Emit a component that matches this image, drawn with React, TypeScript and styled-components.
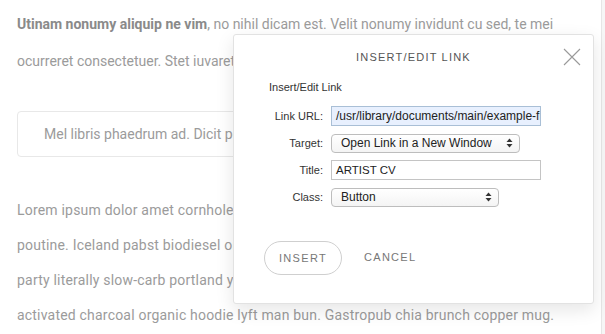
import React from "react";
import styled, { createGlobalStyle } from "styled-components";

const Global = createGlobalStyle`
  html, body { margin: 0; padding: 0; background: #fff; }
  body { width: 605px; height: 334px; overflow: hidden; }
`;

const Frame = styled.div`
  position: relative;
  width: 605px;
  height: 334px;
  display: flex;
  overflow: hidden;
`;

const Page = styled.div`
  flex: 1;
  padding: 6px 0 0 17px;
  font-family: Roboto, "Liberation Sans", sans-serif;
  font-size: 14px;
  color: #9b9b9b;
`;

const Track = styled.div`
  width: 3px;
  border-left: 1px solid #e6e6e6;
  background: #f6f6f6;
`;

const Para = styled.p<{ $lh: number; $ls?: number }>`
  margin: 0;
  line-height: ${(p) => p.$lh}px;
  letter-spacing: ${(p) => p.$ls ?? 0}px;
  white-space: nowrap;
`;

const Strong = styled.b`
  color: #8a8a8a;
  font-weight: 700;
`;

const Quote = styled.div`
  margin: 31px 0 36px;
  height: 46px;
  width: 570px;
  border: 1px solid #e8e8e8;
  border-radius: 4px;
  padding-left: 26px;
  box-sizing: border-box;
  display: flex;
  align-items: center;
  white-space: nowrap;
`;

const Dialog = styled.div`
  position: absolute;
  left: 233px;
  top: 34px;
  width: 361px;
  height: 270px;
  box-sizing: border-box;
  background: #fff;
  border: 1px solid #e2e2e2;
  border-radius: 3px;
  box-shadow: 0 6px 18px rgba(0, 0, 0, 0.1);
  display: flex;
  flex-direction: column;
  font-family: "Liberation Sans", Arial, sans-serif;
  color: #333;
`;

const Header = styled.div`
  height: 44px;
  display: flex;
  align-items: center;
  justify-content: center;
  position: relative;
  font-size: 11px;
  letter-spacing: 1.2px;
  color: #555;
`;

const Close = styled.button`
  position: absolute;
  right: 12px;
  top: 13px;
  width: 18px;
  height: 18px;
  padding: 0;
  border: none;
  background: none;
  display: flex;
`;

const Body = styled.div`
  padding: 0 0 0 35px;
  display: flex;
  flex-direction: column;
`;

const Subtitle = styled.div`
  font-size: 11px;
  height: 16px;
  line-height: 16px;
  margin-bottom: 11px;
`;

const Form = styled.div`
  display: grid;
  grid-template-columns: 54px auto;
  column-gap: 8px;
  row-gap: 7.5px;
  align-items: center;
  justify-items: start;
`;

const Label = styled.label`
  justify-self: end;
  font-size: 11px;
  color: #333;
`;

const TextInput = styled.div<{ $focus?: boolean; $size: number }>`
  width: 210px;
  height: 20px;
  box-sizing: border-box;
  border: 1px solid ${(p) => (p.$focus ? "#a9bfd6" : "#c4c4c4")};
  background: ${(p) => (p.$focus ? "#e8f0fe" : "#fff")};
  font-size: ${(p) => p.$size}px;
  padding: 0 0 0 4px;
  display: flex;
  align-items: center;
  overflow: hidden;
  white-space: nowrap;
  color: #222;
`;

const Select = styled.div<{ $w: number }>`
  width: ${(p) => p.$w}px;
  height: 19px;
  box-sizing: border-box;
  border: 1px solid #bdbdbd;
  border-radius: 4px;
  background: linear-gradient(#fff, #f4f4f4);
  font-size: 12px;
  padding: 0 6px 0 9px;
  display: flex;
  align-items: center;
  justify-content: space-between;
  color: #222;
`;

const Actions = styled.div`
  display: flex;
  align-items: center;
  gap: 22px;
  margin: 34px 0 0 -5px;
`;

const PillButton = styled.button`
  width: 78px;
  height: 34px;
  border: 1px solid #cfcfcf;
  border-radius: 17px;
  background: #fff;
  font-family: "Liberation Sans", Arial, sans-serif;
  font-size: 11px;
  letter-spacing: 1.3px;
  color: #777;
  padding: 0;
`;

const TextButton = styled.button`
  border: none;
  background: none;
  font-family: "Liberation Sans", Arial, sans-serif;
  font-size: 11px;
  letter-spacing: 1.3px;
  color: #777;
  padding: 0;
  margin-top: -2px;
`;

const Arrows = () => (
  <svg width="7" height="10" viewBox="0 0 7 10">
    <path d="M3.5 0.5 L6.5 4 H0.5 Z" fill="#333" />
    <path d="M3.5 9.5 L6.5 6 H0.5 Z" fill="#333" />
  </svg>
);

export default function App() {
  return (
    <>
      <Global />
      <Frame>
        <Page>
          <Para $lh={37}>
            <Strong>Utinam nonumy aliquip ne vim</Strong>, no nihil dicam est. Velit nonumy invidunt cu sed, te mei
            <br />
            ocurreret consectetuer. Stet iuvaret mediocrem an has, mel id nemore
          </Para>
          <Quote>Mel libris phaedrum ad. Dicit perpetua consequuntur ex sit.</Quote>
          <Para $lh={35} $ls={0.2}>
            Lorem ipsum dolor amet cornhole tumeric bespoke kombucha, gastropub
            <br />
            poutine. Iceland pabst biodiesel organic man braid pok pok disrupt
            <br />
            party literally slow-carb portland yuccie raclette flannel tousled
            <br />
            activated charcoal organic hoodie lyft man bun. Gastropub chia brunch copper mug.
          </Para>
        </Page>
        <Track />
        <Dialog>
          <Header>
            INSERT/EDIT LINK
            <Close aria-label="Close">
              <svg width="18" height="18" viewBox="0 0 18 18">
                <path d="M1 1 L17 17 M17 1 L1 17" stroke="#9a9a9a" strokeWidth="1.1" fill="none" />
              </svg>
            </Close>
          </Header>
          <Body>
            <Subtitle>Insert/Edit Link</Subtitle>
            <Form>
              <Label>Link URL:</Label>
              <TextInput $focus $size={12}>/usr/library/documents/main/example-file.pdf</TextInput>
              <Label>Target:</Label>
              <Select $w={189}>
                Open Link in a New Window
                <Arrows />
              </Select>
              <Label>Title:</Label>
              <TextInput $size={11.5}>ARTIST CV</TextInput>
              <Label>Class:</Label>
              <Select $w={168}>
                Button
                <Arrows />
              </Select>
            </Form>
            <Actions>
              <PillButton>INSERT</PillButton>
              <TextButton>CANCEL</TextButton>
            </Actions>
          </Body>
        </Dialog>
      </Frame>
    </>
  );
}
